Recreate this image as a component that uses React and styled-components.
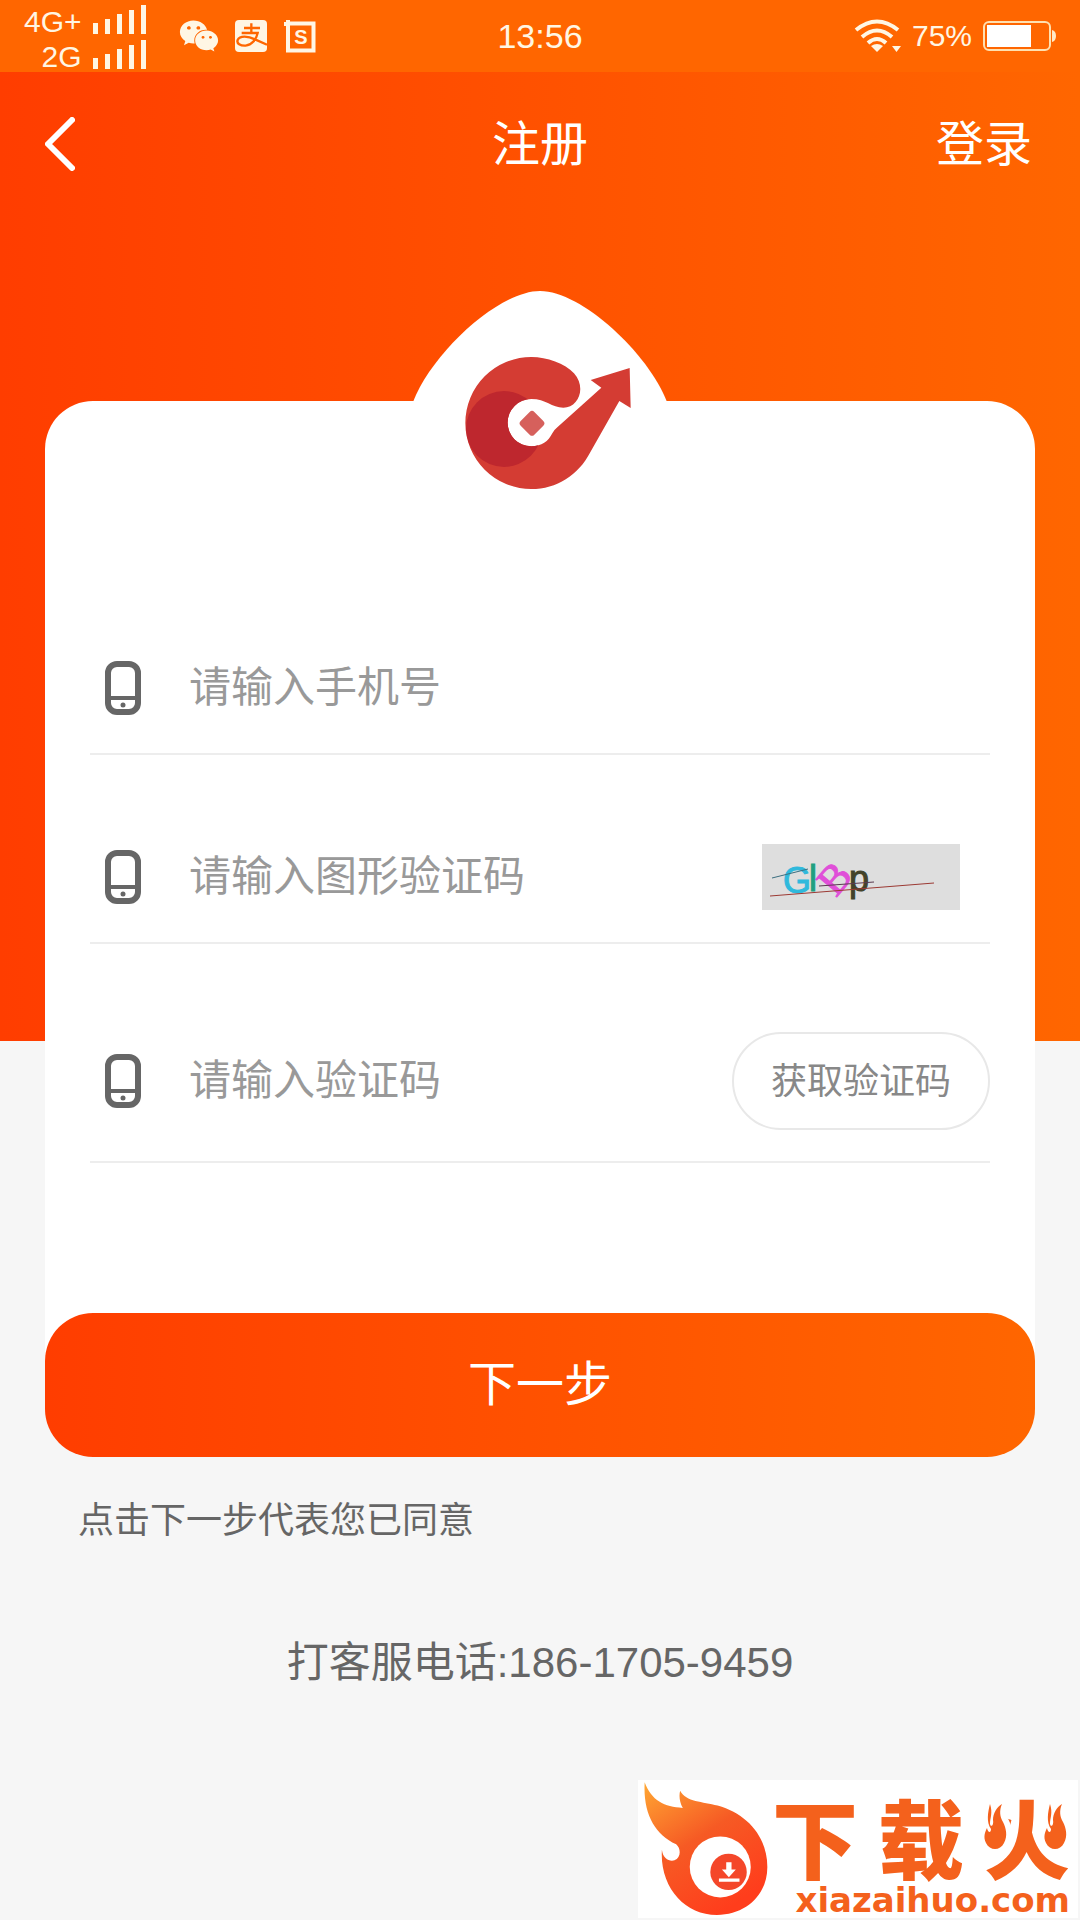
import React from 'react'
import styled, { createGlobalStyle } from 'styled-components'
import { FaWeixin } from 'react-icons/fa'

const bars = [11, 15, 20, 24, 29]

function Signal() {
    return (
        <svg width="54" height="30" viewBox="0 0 54 30" fill="currentColor" aria-hidden="true">
            {bars.map((h, i) => (
                <rect key={h} x={i * 12} y={30 - h} width="5" height={h} />
            ))}
        </svg>
    )
}

function StatusBar() {
    return (
        <Status>
            <StatusLeft>
                <Networks>
                    <Network><span>4G+</span><Signal /></Network>
                    <Network><span>2G</span><Signal /></Network>
                </Networks>
                <Apps>
                    <FaWeixin size={40} />
                    <svg width="32" height="32" viewBox="0 0 96 96" fill="none" stroke="#ff6600" strokeWidth="7">
                        <rect width="96" height="96" rx="12" fill="currentColor" stroke="none" />
                        <path d="M27 24H75M49 10V38M20 39H68C64 58 50 76 32 77C16 78 4 70 8 60C14 46 40 48 60 58L96 74" />
                    </svg>
                    <svg width="34" height="34" viewBox="0 0 34 34">
                        <path d="M5 4.500H30.500V31.500H5Z" fill="none" stroke="currentColor" strokeWidth="4" />
                        <path d="M1 3h6v4H1zM3 1h4v4H3z" fill="currentColor" />
                        <text x="18" y="25" fontSize="20" fontWeight="700" textAnchor="middle" fill="currentColor">S</text>
                    </svg>
                </Apps>
            </StatusLeft>
            <Clock>13:56</Clock>
            <StatusRight>
                <svg width="48" height="34" viewBox="0 0 48 34" fill="none" stroke="currentColor" strokeWidth="4">
                    <path d="M2 11Q23 -6 44 11" />
                    <path d="M8 18Q23 5 38 18" />
                    <path d="M14 24Q23 16 32 24" />
                    <path d="M17 27Q23 23 29 27L23 33Z" fill="currentColor" stroke="none" />
                    <path d="M38 27h9l-4.500 6z" fill="currentColor" stroke="none" />
                </svg>
                <span>75%</span>
                <svg width="74" height="32" viewBox="0 0 74 32">
                    <rect x="2" y="2" width="66" height="28" rx="5" fill="none" stroke="#ffe0b0" strokeWidth="2" />
                    <rect x="5" y="5" width="44" height="22" fill="#fff" />
                    <path d="M70 10q4 1 4 6t-4 6z" fill="#ffe9c8" />
                </svg>
            </StatusRight>
        </Status>
    )
}

function Emblem() {
    return (
        <EmblemSvg viewBox="69 63 762 600" role="img" aria-label="logo">
            <defs>
                <clipPath id="mark">
                    <path d={markPath} />
                </clipPath>
            </defs>
            <path d="M69 396C125 250 325 63 450 63C575 63 775 250 831 396Z" fill="#fff" />
            <path d={markPath} fill="#d43c33" />
            <circle cx="342" cy="477" r="114" fill="#be272e" clipPath="url(#mark)" />
            <rect x="397" y="431" width="58" height="58" rx="10" fill="#d6605c" transform="rotate(45 426 460)" />
        </EmblemSvg>
    )
}

const markPath =
    'M425 261C470 261 525 280 552 310C590 352 566 413 520 413C485 413 468 387 424 387' +
    'A71 71 0 1 0 424 529C455 529 475 514 487 490Q492 480 502 472L634 353L602 330L719 294' +
    'L722 414L688 393L600 548C565 615 500 657 424 657A198 198 0 0 1 424 261Z'

function PhoneIcon() {
    return (
        <svg width="36" height="54" viewBox="0 0 36 54" aria-hidden="true">
            <rect x="3" y="3" width="30" height="48" rx="9" fill="none" stroke="#666" strokeWidth="6" />
            <path d="M4 37H32" stroke="#666" strokeWidth="4" />
            <circle cx="18" cy="44" r="2.500" fill="#666" />
        </svg>
    )
}

function Captcha() {
    return (
        <CaptchaButton type="button" aria-label="刷新图形验证码">
            <svg width="198" height="66" viewBox="0 0 198 66">
                <g fontSize="36">
                    <text x="21" y="49" fill="#2fb9dc" stroke="#2fb9dc">G</text>
                    <text x="47" y="47" fill="#20a080" stroke="#20a080">l</text>
                    <text x="74" y="54" fontSize="42" fontFamily="Liberation Sans Narrow" fill="#e04fd8" stroke="#e04fd8" transform="rotate(-50 74 54)">B</text>
                    <text x="87" y="47" fill="#43432a" stroke="#43432a">p</text>
                </g>
                <path d="M10 34L46 25" stroke="#3b6f80" />
                <path d="M57 42L112 38" stroke="#5a3a50" />
                <path d="M8 52L172 39" stroke="#9c3a34" />
            </svg>
        </CaptchaButton>
    )
}

function Field({ id, label, type, children }) {
    return (
        <Row>
            <label htmlFor={id} aria-label={label}><PhoneIcon /></label>
            <TextInput id={id} type={type} placeholder={label} />
            {children}
        </Row>
    )
}

function Watermark() {
    return (
        <Mark>
            <svg width="124" height="134" viewBox="38 35 374 402" aria-hidden="true">
                <defs>
                    <linearGradient id="flame" x1="0" y1="0" x2="0.600" y2="1">
                        <stop offset="0" stopColor="#ffa733" />
                        <stop offset="0.500" stopColor="#f65a24" />
                        <stop offset="1" stopColor="#ff3d1c" />
                    </linearGradient>
                </defs>
                <path
                    fill="url(#flame)"
                    d="M40 35C60 90 100 110 155 112C145 95 143 75 147 60C165 95 215 92 260 105C350 130 410 200 410 290C410 375 345 435 258 435C160 435 85 350 92 238C95 265 115 275 130 270C150 262 150 235 135 222C70 190 35 130 40 35Z"
                />
                <circle cx="268" cy="290" r="92" fill="#fff" />
                <circle cx="293" cy="305" r="55" fill="#f4472a" />
                <path d="M286 276h16v22h13l-21 23-21-23h13zM264 325h62v10h-62z" fill="#fff" />
            </svg>
            <MarkText>
                <MarkName>
                    <span>下</span>
                    <span>载</span>
                    <span>火</span>
                    <Flames viewBox="0 0 92 50" aria-hidden="true">
                        <path d={flamePath} transform="translate(6 0)" />
                        <path d={flamePath} transform="translate(66 0)" />
                    </Flames>
                </MarkName>
                <MarkSite>xiazaihuo.com</MarkSite>
            </MarkText>
        </Mark>
    )
}

const flamePath =
    'M6 2C9 11 6 16 6 22C7 26 10 23 9 18C9 11 13 5 18 2C15 9 16 15 19 20' +
    'C22 26 24 34 20 41C16 49 6 49 2 41C-1 35 1 30 3 26C4 31 7 31 7 27C2 20 4 10 6 2Z'

function App() {
    return (
        <Page>
            <GlobalStyle />
            <StatusBar />
            <Header>
                <BackButton type="button" aria-label="返回">
                    <svg width="30" height="54" viewBox="0 0 30 54" fill="none" stroke="#fff" strokeWidth="6" strokeLinecap="round" strokeLinejoin="round">
                        <path d="M27 3L3 27L27 51" />
                    </svg>
                </BackButton>
                <Title>注册</Title>
                <LoginLink href="#login">登录</LoginLink>
            </Header>

            <Form onSubmit={(e) => e.preventDefault()}>
                <Emblem />
                <Card>
                    <Field id="phone" type="tel" label="请输入手机号" />
                    <Field id="captcha" type="text" label="请输入图形验证码">
                        <Captcha />
                    </Field>
                    <Field id="code" type="text" label="请输入验证码">
                        <CodeButton type="button">获取验证码</CodeButton>
                    </Field>
                </Card>
                <NextButton type="submit">下一步</NextButton>
                <Agreement>点击下一步代表您已同意</Agreement>
            </Form>

            <Service href="tel:18617059459">打客服电话:186-1705-9459</Service>
            <Watermark />
        </Page>
    )
}

export default App

const GlobalStyle = createGlobalStyle`
* {
    box-sizing: border-box;
}
body {
    margin: 0;
    background: #f6f6f6;
    font-family: "Liberation Sans", "Noto Sans CJK SC", sans-serif;
}
button, input {
    font-family: inherit;
}
svg {
    display: block;
    flex-shrink: 0;
}
`

const Page = styled.div`
    display: flex;
    flex-direction: column;
    min-height: 100vh;
    padding-bottom: 2px;
    background: linear-gradient(90deg, #ff3d00, #ff6600) top / 100% 1041px no-repeat #f6f6f6;
`

const Status = styled.div`
    display: grid;
    grid-template-columns: 1fr auto 1fr;
    align-items: center;
    height: 72px;
    padding: 0 24px;
    background: #ff6600;
    color: #fff6e4;
    font-size: 30px;
    overflow: hidden;
`

const StatusLeft = styled.div`
    display: flex;
    align-items: center;
    gap: 32px;
`

const Networks = styled.div`
    display: flex;
    flex-direction: column;
    align-items: flex-end;
`

const Network = styled.div`
    display: flex;
    align-items: center;
    gap: 11px;
    height: 35px;
    line-height: 35px;

    span {
        padding-top: 6px;
    }
`

const Apps = styled.div`
    display: flex;
    align-items: center;
    gap: 16px;
`

const Clock = styled.span`
    font-size: 34px;
`

const StatusRight = styled.div`
    display: flex;
    align-items: center;
    justify-content: flex-end;
    gap: 10px;
`

const Header = styled.header`
    display: grid;
    grid-template-columns: 1fr auto 1fr;
    align-items: center;
    height: 144px;
    padding: 0 45px;
    color: #fff;
    font-size: 48px;
`

const BackButton = styled.button`
    justify-self: start;
    padding: 0;
    border: none;
    background: none;
`

const Title = styled.h1`
    margin: 0;
    padding-bottom: 8px;
    font-size: 48px;
    font-weight: 400;
`

const LoginLink = styled.a`
    justify-self: end;
    padding: 0 3px 8px 0;
    color: #fff;
    text-decoration: none;
`

const Form = styled.form`
    display: flex;
    flex-direction: column;
    padding: 75px 45px 0;
`

const EmblemSvg = styled.svg`
    position: relative;
    align-self: center;
    width: 254px;
    height: 200px;
    margin-bottom: -90px;
`

const Card = styled.div`
    display: flex;
    flex-direction: column;
    gap: 57px;
    padding: 222px 45px;
    border-radius: 48px 48px 0 0;
    background: #fff;
`

const Row = styled.div`
    display: flex;
    align-items: center;
    min-height: 132px;
    padding: 31px 0 31px 15px;
    border-bottom: 2px solid #ededed;
`

const TextInput = styled.input`
    flex: 1;
    min-width: 0;
    height: 60px;
    margin-left: 48px;
    padding: 0;
    border: none;
    outline: none;
    background: none;
    color: #333;
    font-size: 42px;

    &::placeholder {
        color: #999;
        opacity: 1;
    }
`

const CaptchaButton = styled.button`
    margin-right: 30px;
    padding: 0;
    border: none;
    background: #dedede;
`

const CodeButton = styled.button`
    height: 98px;
    padding: 0 37px 6px;
    border: 2px solid #e8e8e8;
    border-radius: 49px;
    background: #fff;
    color: #888;
    font-size: 36px;
`

const NextButton = styled.button`
    height: 144px;
    margin-top: -72px;
    padding-bottom: 12px;
    border: none;
    border-radius: 48px;
    background: linear-gradient(90deg, #ff3d00, #ff6600);
    color: #fff;
    font-size: 48px;
`

const Agreement = styled.p`
    margin: 40px 33px 0;
    color: #666;
    font-size: 36px;
    line-height: 48px;
`

const Service = styled.a`
    align-self: center;
    margin: 94px 0 80px;
    color: #666;
    font-size: 42px;
    line-height: 48px;
    text-decoration: none;
`

const Mark = styled.div`
    display: flex;
    align-self: flex-end;
    align-items: center;
    gap: 4px;
    margin: auto 2px 0 0;
    padding: 0 8px 0 6px;
    background: #fff;
`

const MarkText = styled.div`
    display: flex;
    flex-direction: column;
    align-items: flex-end;
    gap: 10px;
    padding-top: 20px;
    color: #f4611c;
`

const MarkName = styled.div`
    position: relative;
    display: flex;
    gap: 20px;
    font-family: "Noto Sans CJK SC", sans-serif;
    font-size: 86px;
    font-weight: 900;
    line-height: 72px;
`

/* flames over the side strokes of the last character */
const Flames = styled.svg`
    position: absolute;
    top: 2px;
    right: 0;
    width: 92px;
    height: 50px;
    fill: #f4611c;
    stroke: #fff;
    stroke-width: 12px;
    paint-order: stroke;
`

const MarkSite = styled.span`
    font-family: "DejaVu Sans", sans-serif;
    font-size: 34px;
    font-weight: 700;
    line-height: 36px;
`
